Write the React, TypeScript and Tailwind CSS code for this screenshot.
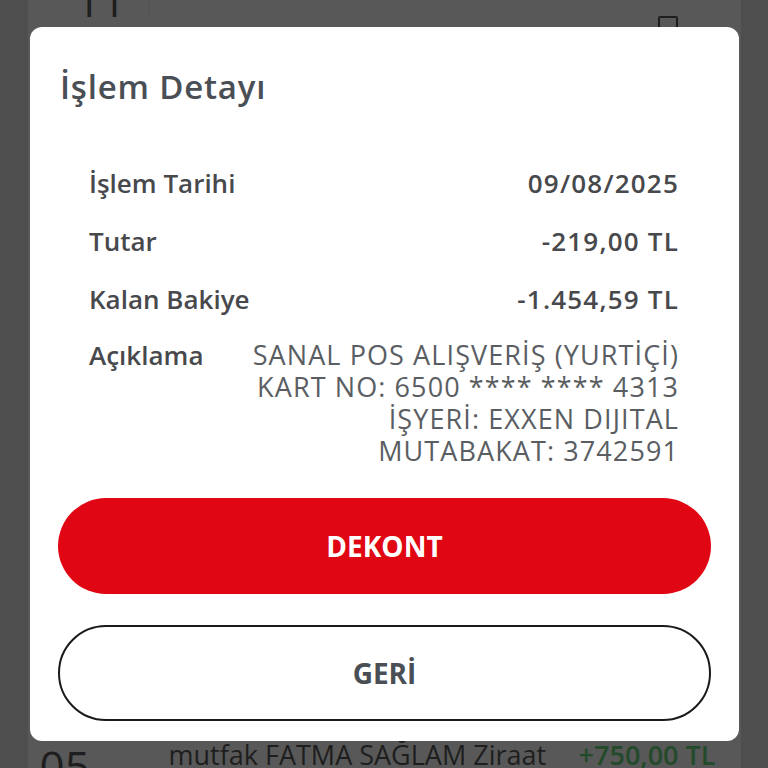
import React from "react";

const rows = [
    { label: "İşlem Tarihi", value: "09/08/2025" },
    { label: "Tutar", value: "-219,00 TL" },
    { label: "Kalan Bakiye", value: "-1.454,59 TL" },
];

const descLines = [
    "SANAL POS ALIŞVERİŞ (YURTİÇİ)",
    "KART NO: 6500 **** **** 4313",
    "İŞYERİ: EXXEN DIJITAL",
    "MUTABAKAT: 3742591",
];

const Backdrop = () => {
    return (
        <div className="h-full bg-[#4e4e4e] flex justify-center">
            <div className="w-[713px] h-full bg-[#585858] flex flex-col justify-between">
                <div className="flex items-start h-[40px] -mt-[22px]">
                    <div className="w-[121px] pl-[48px] text-[44px] leading-[44px] text-[#1e1e1e]">11</div>
                    <div className="w-px h-full bg-[#525252]" />
                    <div className="flex-1 flex justify-end pr-[63px] pt-[38px]">
                        <div className="w-[20px] h-[14px] border-2 border-[#1e1e1e] rounded-[2px]" />
                    </div>
                </div>
                <div className="flex items-start h-[24px]">
                    <div className="w-[121px] pl-[12px] text-[44px] leading-[44px] text-[#1e1e1e]">05</div>
                    <div className="flex-1 flex justify-between pl-[20px] pr-[25px] text-[27px] leading-[34px] -mt-[6px]">
                        <span className="text-[#1e1e1e]">mutfak FATMA SAĞLAM Ziraat</span>
                        <span className="text-[#234a2a] font-semibold">+750,00 TL</span>
                    </div>
                </div>
            </div>
        </div>
    );
};

const DetailModal = () => {
    return (
        <div className="absolute left-[30px] top-[27px] w-[709px] h-[714px] bg-white rounded-[12px] flex flex-col px-[28px]">
            <h1 className="pt-[40px] pl-[2px] text-[33px] leading-[40px] font-semibold tracking-[0.8px] text-[#4a4f55]">İşlem Detayı</h1>
            <div className="flex flex-col pl-[31px] pr-[32px] pt-[47px] text-[#47494c]">
                {rows.map((r) => (
                    <div key={r.label} className="flex justify-between items-center h-[58px] text-[26px] font-semibold">
                        <span>{r.label}</span>
                        <span className="tracking-[1.2px]">{r.value}</span>
                    </div>
                ))}
                <div className="flex justify-between items-start mt-[11px]">
                    <span className="text-[26px] font-semibold leading-[32px]">Açıklama</span>
                    <div className="flex flex-col items-end text-[27px] tracking-[1.1px] text-[#5a5e63] leading-[32px]">
                        {descLines.map((l) => (
                            <span key={l}>{l}</span>
                        ))}
                    </div>
                </div>
            </div>
            <div className="flex flex-col gap-[31px] mt-[31px]">
                <button className="h-[96px] w-full rounded-full bg-[#e10613] text-white text-[28px] font-bold">
                    DEKONT
                </button>
                <button className="h-[96px] w-full rounded-full border-2 border-[#1a1a1a] bg-white text-[#4a4f55] text-[28px] font-bold">
                    GERİ
                </button>
            </div>
        </div>
    );
};

const App = () => {
    return (
        <div className="relative w-[768px] h-[768px] overflow-hidden" style={{ fontFamily: "'Open Sans', 'Noto Sans', sans-serif" }}>
            <Backdrop />
            <DetailModal />
        </div>
    );
};

export default App;
